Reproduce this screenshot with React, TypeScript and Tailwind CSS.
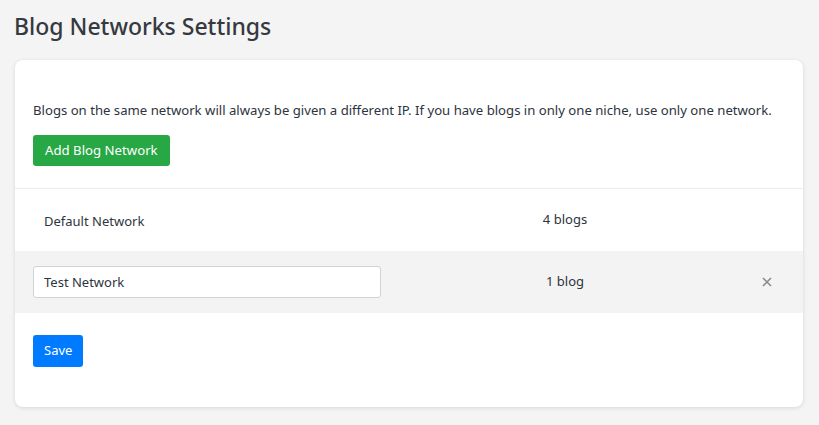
import { useState } from 'react'

const networks = [
  { id: 1, name: 'Default Network', blogs: '4 blogs', editable: false },
  { id: 2, name: 'Test Network', blogs: '1 blog', editable: true },
]

export default function App() {
  const [names, setNames] = useState<Record<number, string>>({ 2: 'Test Network' })

  return (
    <div className="min-h-screen bg-[#f4f4f4] px-[15px] pt-[10px] pb-[18px] text-[#212529]" style={{ fontFamily: '"Noto Sans", "Open Sans", sans-serif' }}>
      {/* Title */}
      <h1 className="h-[50px] -ml-[1px] text-[23px] leading-[32px] font-medium text-[#343a40]">Blog Networks Settings</h1>

      <div className="bg-white rounded-[8px] shadow-[0_1px_4px_rgba(0,0,0,0.12)] w-[788px]">
        {/* Intro */}
        <div className="px-[18px] pt-[40px] pb-[22px] border-b border-[#ececec]">
          <p className="text-[13.15px] leading-[20px] text-[#2d3440]">
            Blogs on the same network will always be given a different IP. If you have blogs in only one niche, use only one network.
          </p>
          <button className="mt-[15px] h-[31px] px-[12px] rounded-[3px] bg-[#28a745] text-white text-[13.2px]">
            Add Blog Network
          </button>
        </div>

        {/* Network rows */}
        {networks.map((n, i) => (
          <div key={n.id} className={`grid grid-cols-[348px_368px_1fr] items-center h-[62px] px-[18px] ${i % 2 === 1 ? 'bg-[#f3f3f3]' : 'bg-white'}`}>
            <div>
              {n.editable ? (
                <input
                  value={names[n.id]}
                  onChange={e => setNames({ ...names, [n.id]: e.target.value })}
                  className="w-full h-[32px] px-[10px] bg-white border border-[#ced4da] rounded-[3px] text-[13px] text-[#2d3440] outline-none"
                />
              ) : (
                <span className="pl-[11px] text-[13px] text-[#2d3440]">{n.name}</span>
              )}
            </div>
            <div className="text-center text-[13px] text-[#2d3440]">{n.blogs}</div>
            <div className="flex justify-center">
              {n.editable && (
                <button className="p-[2px]">
                  <svg width="10" height="10" viewBox="0 0 10 10" className="text-[#8a8a8a]">
                    <path d="M1 1 L9 9 M9 1 L1 9" stroke="currentColor" strokeWidth="1.6" />
                  </svg>
                </button>
              )}
            </div>
          </div>
        ))}

        {/* Save */}
        <div className="px-[18px] pt-[22px] pb-[40px]">
          <button className="h-[32px] px-[11px] rounded-[3px] bg-[#007bff] text-white text-[13px]">Save</button>
        </div>
      </div>
    </div>
  )
}
